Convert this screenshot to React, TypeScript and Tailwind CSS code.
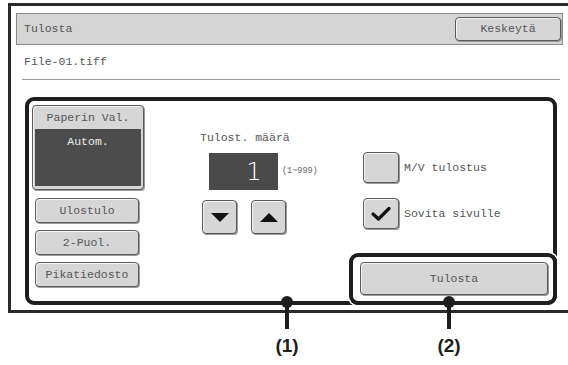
import React from "react";

const btn =
  "flex items-center justify-center rounded-[4px] border border-[#5a5a5a] bg-[#d6d6d6] shadow-[inset_1px_1px_0_#f4f4f4,1px_1px_0_#9a9a9a] text-[11.5px] text-[#555]";

function Marker({ x, label }: { x: number; label: string }) {
  return (
    <>
      <span className="absolute top-[296px] h-[12px] w-[12px] -translate-x-1/2 rounded-full bg-[#1e1e1e]" style={{ left: x }} />
      <span className="absolute top-[302px] h-[27px] w-[4px] -translate-x-1/2 bg-[#1e1e1e]" style={{ left: x }} />
      <span
        className="absolute top-[334px] -translate-x-1/2 font-['Liberation_Sans',Arial,sans-serif] text-[19px] font-bold leading-[24px] text-[#1e1e1e]"
        style={{ left: x }}
      >
        {label}
      </span>
    </>
  );
}

function Arrow({ up }: { up?: boolean }) {
  return (
    <button className={`${btn} h-[34px] w-[35px]`} aria-label={up ? "Lisää" : "Vähennä"}>
      <svg width="20" height="11" viewBox="0 0 20 11">
        <polygon points={up ? "10,1 19,10 1,10" : "1,1 19,1 10,10"} fill="#111" />
      </svg>
    </button>
  );
}

function Check({ checked, label }: { checked?: boolean; label: string }) {
  return (
    <div className="flex items-center">
      <span className={`${btn} h-[31px] w-[36px]`}>
        {checked && (
          <svg width="22" height="16" viewBox="0 0 22 16">
            <path d="M3 8 L8.5 13 L19 2.5" fill="none" stroke="#111" strokeWidth="3.2" strokeLinecap="round" strokeLinejoin="round" />
          </svg>
        )}
      </span>
      <span className="ml-[5px] text-[11.5px] text-[#555]">{label}</span>
    </div>
  );
}

export default function App() {
  return (
    <div className="relative h-[365px] w-[568px] overflow-hidden bg-white font-['Liberation_Mono','Courier_New',monospace] text-[#555]">
      <div className="ml-2 mt-[3px] h-[310px] border-b-[3px] border-l-[3px] border-t-[3px] border-[#2a2a2a] pl-[5px] pt-[7px]">
        {/* Title bar */}
        <div className="flex h-[32px] w-[547px] items-center justify-between border border-[#8a8a8a] bg-[#d5d5d5] pl-[7px] pr-[1px]">
          <span className="text-[11.5px]">Tulosta</span>
          <button className={`${btn} h-[24px] w-[106px]`}>Keskeytä</button>
        </div>

        <div className="mt-[9px] pl-[8px] text-[11.5px] leading-[16px]">File-01.tiff</div>
        <div className="ml-[6px] mt-[9px] h-px w-[538px] bg-[#9a9a9a]" />

        {/* Section (1) */}
        <div className="relative ml-[9px] mt-[17px] h-[208px] w-[532px] rounded-[9px] border-4 border-[#1e1e1e]">
          <div className="flex">
            {/* Left column */}
            <div className="ml-[3px] mt-[4px] flex w-[112px] flex-col">
              <div className="h-[85px] rounded-[4px] border border-[#5a5a5a] bg-[#d6d6d6] px-[2px] shadow-[inset_1px_1px_0_#f4f4f4,1px_1px_0_#9a9a9a]">
                <div className="flex h-[23px] items-center justify-center text-[11.5px]">Paperin Val.</div>
                <div className="h-[57px] bg-[#4c4c4c] pt-[4px] text-center text-[11.5px] text-[#f0f0f0]">Autom.</div>
              </div>
              <button className={`${btn} ml-[3px] mt-[8px] h-[25px] w-[104px]`}>Ulostulo</button>
              <button className={`${btn} ml-[3px] mt-[7px] h-[25px] w-[104px]`}>2-Puol.</button>
              <button className={`${btn} ml-[3px] mt-[7px] h-[25px] w-[104px]`}>Pikatiedosto</button>
            </div>

            {/* Counter column */}
            <div className="ml-[56px] mt-[30px] flex w-[163px] flex-col">
              <div className="text-[11.5px] leading-[14px]">Tulost. määrä</div>
              <div className="ml-[9px] mt-[8px] flex items-center">
                <div className="flex h-[37px] w-[69px] items-center justify-end bg-[#4a4a4a] pr-[16px] font-['DejaVu_Sans',sans-serif] text-[25px] font-light text-white">
                  1
                </div>
                <span className="ml-[4px] text-[8.5px] text-[#666]">(1~999)</span>
              </div>
              <div className="ml-[2px] mt-[10px] flex gap-[14px]">
                <Arrow />
                <Arrow up />
              </div>
            </div>

            {/* Options column */}
            <div className="mt-[51px] flex flex-col gap-[15px]">
              <Check label="M/V tulostus" />
              <Check checked label="Sovita sivulle" />
            </div>
          </div>

          {/* Section (2) */}
          <div className="absolute bottom-[-4px] right-[-4px] h-[52px] w-[208px] rounded-[9px] border-4 border-[#1e1e1e] pb-[6px] pl-[7px] pr-[5px] pt-[5px] shadow-[0_0_0_1.5px_#fff]">
            <button className={`${btn} h-full w-full`}>Tulosta</button>
          </div>
        </div>
      </div>

      <Marker x={287} label="(1)" />
      <Marker x={449} label="(2)" />
    </div>
  );
}
